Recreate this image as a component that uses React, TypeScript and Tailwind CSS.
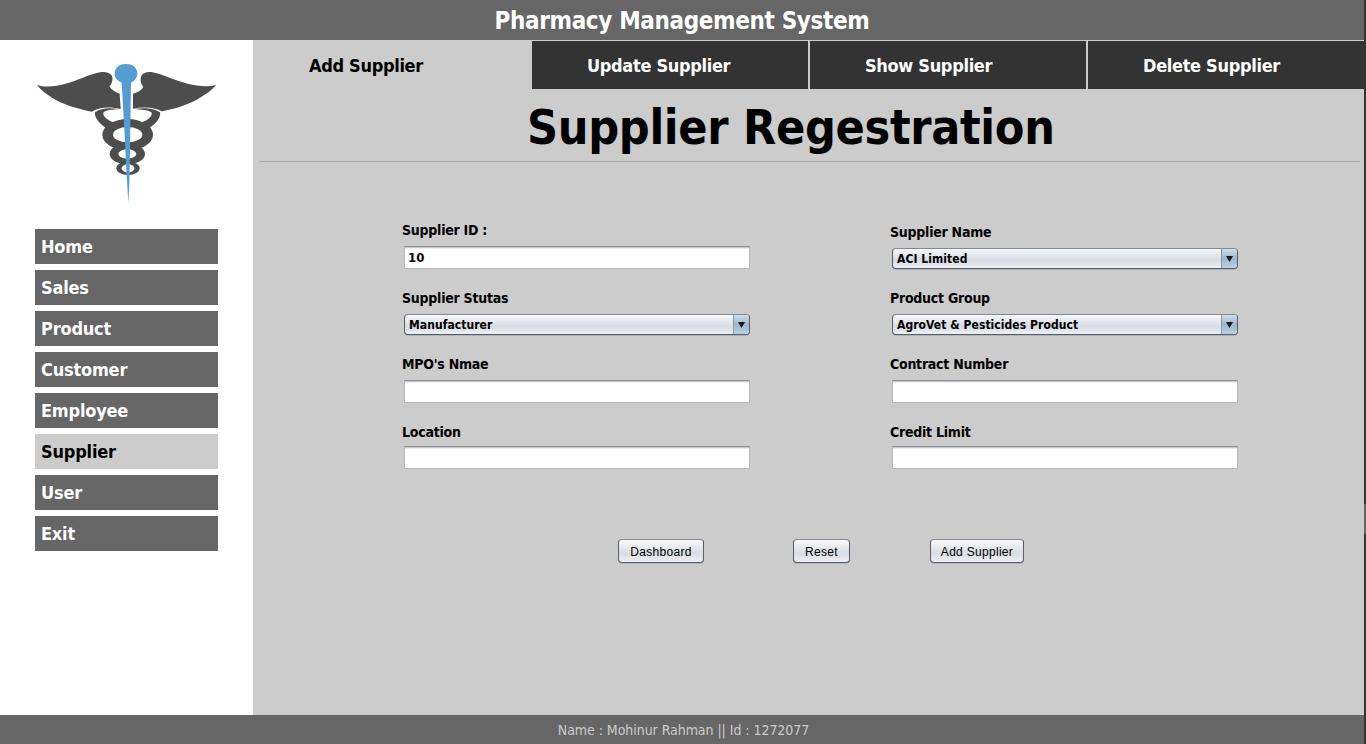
import React from "react";

const tahoma = "font-['DejaVu_Sans_Condensed','DejaVu_Sans',sans-serif] [font-stretch:condensed]";

function Logo() {
  return (
    <svg viewBox="0 0 600 480" className="block h-[160px] w-[200px]" aria-label="Caduceus">
      <g fill="#4d4d4d">
        <path d="M33 93C75 106 127 88 171 71C207 56 240 46 255 62C264 72 258 90 250 97C256 108 270 115 281 119L284 165C252 157 220 159 197 173C150 163 108 150 78 131C54 116 41 104 33 93Z" />
        <path d="M570 93C528 104 476 88 430 71C394 56 362 46 348 62C340 74 345 91 352 98C345 111 332 115 321 119V164C352 158 384 159 407 172C450 164 490 151 522 131C548 116 562 104 570 93Z" />
        <path d="M278 166C252 160 224 163 207 175C205 190 217 206 240 222L264 206C243 199 227 184 233 175C242 167 260 167 278 166Z" />
        <path d="M326 165C350 160 384 162 402 175C405 190 393 206 370 222L346 206C367 199 382 184 376 175C365 167 346 167 326 165Z" />
        <path d="M262 276H348L336 294H274ZM277 318H333L324 334H287Z" />
        <ellipse cx="305" cy="242" rx="76" ry="47" />
        <ellipse cx="304" cy="300" rx="53" ry="31" />
        <ellipse cx="306" cy="343" rx="35" ry="20" />
      </g>
      <g fill="#fff">
        <ellipse cx="305" cy="242" rx="44" ry="23" />
        <ellipse cx="304" cy="300" rx="27" ry="14" />
        <ellipse cx="306" cy="343" rx="19" ry="12" />
      </g>
      <path fill="#559cd3" d="M287 86C273 80 265 70 266 57C267 40 281 30 300 30C319 30 333 40 334 57C334 71 327 80 315 86L312 280L310 390L307 445L302 365L295 225Z" />
    </svg>
  );
}

const navItems = ["Home", "Sales", "Product", "Customer", "Employee", "Supplier", "User", "Exit"];

function Label({ children }: { children: React.ReactNode }) {
  return <label className="block h-[17px] text-[14px] leading-[17px] font-bold tracking-[-0.25px] whitespace-nowrap">{children}</label>;
}

function TextBox({ value = "" }: { value?: string }) {
  return (
    <div className="ml-[2px] h-[23px] w-[346px] border border-[#b5b7ba] border-t-[#8c8e92] bg-white pl-[3px] text-[13px] leading-[22px] font-bold shadow-[inset_0_1px_0_#c8c9cc,inset_0_2px_0_#f0f0f2]">
      {value}
    </div>
  );
}

function Select({ value }: { value: string }) {
  return (
    <div className="ml-[2px] flex h-[21px] w-[346px] overflow-hidden rounded-[4px] border border-[#555c68] border-t-[#84888f] bg-linear-to-b from-[#f7f8fa] via-[#d7dbe2] via-60% to-[#eef1f6] shadow-[0_1px_0_#aeb2b9]">
      <span className="flex-1 pl-[4px] text-[12px] leading-[20px] font-bold tracking-[0.06px]">{value}</span>
      <span className="flex w-[16px] items-center justify-center border-l border-[#7e99b0] bg-linear-to-b from-[#d1deeb] via-[#9eb5ca] to-[#bdd3e5]">
        <svg viewBox="0 0 7 6" className="h-[6px] w-[7px]">
          <path d="M0 0H7L3.5 6Z" fill="#171b20" />
        </svg>
      </span>
    </div>
  );
}

function Button({ className, children }: { className: string; children: string }) {
  return (
    <button className={"h-[24px] rounded-[4px] border border-[#565b66] border-t-[#85888f] bg-linear-to-b from-[#f9fafb] via-[#d8dce3] via-60% to-[#eef0f5] font-['Liberation_Sans',sans-serif] text-[12px] leading-[24px] tracking-[0.3px] whitespace-nowrap shadow-[0_1px_0_#b4b7bc] " + className}>
      {children}
    </button>
  );
}

export default function App() {
  return (
    <div className={"flex h-[744px] w-[1366px] overflow-hidden bg-[#333] text-black " + tahoma}>
      <div className="flex w-[1364px] flex-col">
        <header className="h-[40px] bg-[#666] text-center text-[24px] leading-[42px] font-bold text-white">
          <span className="tracking-[-0.36px]">Pharmacy Management System</span>
        </header>
        <div className="flex h-[675px]">
          <aside className="w-[253px] bg-white pt-[14px]">
            <div className="pl-[26px]">
              <Logo />
            </div>
            <nav className="mt-[15px] ml-[35px] flex w-[183px] flex-col gap-[6px]">
              {navItems.map((item) => (
                <a
                  key={item}
                  className={
                    "h-[35px] pl-[6px] text-[18px] leading-[35px] font-bold tracking-[-0.2px] " +
                    (item === "Supplier" ? "bg-[#ccc] text-black" : "bg-[#666] text-white")
                  }
                >
                  {item}
                </a>
              ))}
            </nav>
          </aside>
          <main className="flex w-[1111px] flex-col bg-[#ccc]">
            <div className="mt-px flex h-[48px] gap-[2px] text-[18px] leading-[50px] font-bold tracking-[-0.32px]">
              <div className="w-[277px] pl-[56px]">Add Supplier</div>
              <div className="w-[276px] bg-[#333] pl-[55px] text-white">Update Supplier</div>
              <div className="w-[276px] bg-[#333] pl-[55px] text-white">Show Supplier</div>
              <div className="w-[276px] bg-[#333] pl-[55px] text-white">Delete Supplier</div>
            </div>
            <h1 className="h-[72px] pl-[274px] text-[48px] leading-[76px] font-bold tracking-[-0.32px] whitespace-nowrap">Supplier Regestration</h1>
            <div className="mr-[4px] ml-[6px] h-px shrink-0 bg-[#a9aab0]" />
            <form className="flex gap-[140px] pt-[60px] pl-[149px]">
              <div className="w-[348px]">
                <Label>Supplier ID :</Label>
                <div className="mt-[7px] mb-[21px]"><TextBox value="10" /></div>
                <Label>Supplier Stutas</Label>
                <div className="mt-[7px] mb-[21px]"><Select value="Manufacturer" /></div>
                <Label>MPO's Nmae</Label>
                <div className="mt-[7px] mb-[21px]"><TextBox /></div>
                <Label>Location</Label>
                <div className="mt-[5px]"><TextBox /></div>
              </div>
              <div className="w-[348px] pt-[2px]">
                <Label>Supplier Name</Label>
                <div className="mt-[7px] mb-[21px]"><Select value="ACI Limited" /></div>
                <Label>Product Group</Label>
                <div className="mt-[7px] mb-[21px]"><Select value="AgroVet & Pesticides Product" /></div>
                <Label>Contract Number</Label>
                <div className="mt-[7px] mb-[21px]"><TextBox /></div>
                <Label>Credit Limit</Label>
                <div className="mt-[5px]"><TextBox /></div>
              </div>
            </form>
            <div className="mt-[70px] flex pl-[365px]">
              <Button className="w-[86px]">Dashboard</Button>
              <Button className="ml-[89px] w-[57px]">Reset</Button>
              <Button className="ml-[80px] w-[94px]">Add Supplier</Button>
            </div>
          </main>
        </div>
        <footer className="h-[29px] bg-[#666] pl-[3px] text-center text-[14px] leading-[30px] text-[#ccc]">
          <span className="tracking-[-0.05px]">Name : Mohinur Rahman || Id : 1272077</span>
        </footer>
      </div>
      <div className="w-[2px] pt-[504px]">
        <div className="h-[30px] bg-[#666]" />
      </div>
    </div>
  );
}
